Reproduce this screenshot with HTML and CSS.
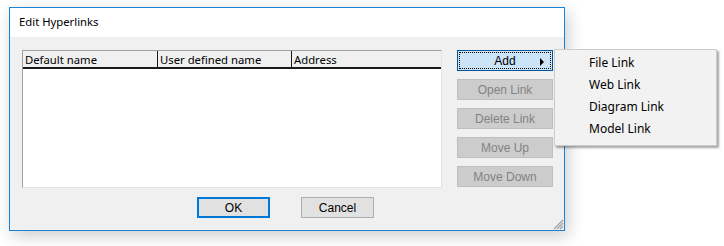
FILE: index.html
```html
<!DOCTYPE html>
<html lang="en">
<head>
    <meta charset="UTF-8">
    <title>Edit Hyperlinks</title>
    <link rel="stylesheet" href="styles.css">
</head>
<body>
    <div class="dialog">
        <div class="title-bar">Edit Hyperlinks</div>
        <div class="dialog-body">
            <div class="main-row">
                <!-- Hyperlink list -->
                <div class="list-box">
                    <div class="list-header">
                        <div class="col col-default">Default name</div>
                        <div class="col col-user">User defined name</div>
                        <div class="col col-address">Address</div>
                    </div>
                </div>

                <div class="side-buttons">
                    <button class="btn btn-add"><span class="focus-rect">Add<span class="arrow"></span></span></button>
                    <button class="btn btn-disabled">Open Link</button>
                    <button class="btn btn-disabled">Delete Link</button>
                    <button class="btn btn-disabled">Move Up</button>
                    <button class="btn btn-disabled">Move Down</button>
                </div>
            </div>

            <div class="bottom-row">
                <button class="btn btn-ok">OK</button>
                <button class="btn btn-cancel">Cancel</button>
            </div>

            <svg class="grip" width="11" height="11" viewBox="0 0 11 11">
                <path d="M10 1 L1 10 M10 4 L4 10 M10 7 L7 10" stroke="#a0a0a0" stroke-width="1.2"/>
            </svg>
        </div>
    </div>

    <!-- Add submenu -->
    <div class="popup-menu">
        <div class="menu-item">File Link</div>
        <div class="menu-item">Web Link</div>
        <div class="menu-item">Diagram Link</div>
        <div class="menu-item">Model Link</div>
    </div>
</body>
</html>
```

FILE: styles.css
```css
/* Page */
body {
    margin: 0;
    background: #ffffff;
    font-family: "Noto Sans", "Liberation Sans", sans-serif;
    font-size: 11.3px;
    color: #000;
    position: relative;
    width: 724px;
    height: 246px;
    overflow: hidden;
}

/* Dialog window */
.dialog {
    position: relative;
    margin: 7px 0 0 9px;
    width: 554px;
    height: 222px;
    border: 1px solid #1883d7;
    background: #f0f0f0;
    box-shadow: 3px 5px 16px rgba(0, 0, 0, 0.2);
    display: flex;
    flex-direction: column;
}

.title-bar {
    height: 29px;
    background: #ffffff;
    padding-left: 9px;
    line-height: 27px;
}

.dialog-body {
    flex: 1;
    padding: 13px 0 0 12px;
    display: flex;
    flex-direction: column;
}

.main-row {
    display: flex;
    gap: 15px;
}

/* List box */
.list-box {
    width: 418px;
    height: 136px;
    background: #ffffff;
    border-top: 1px solid #a0a0a0;
    border-left: 1px solid #a0a0a0;
    border-right: 1px solid #e3e3e3;
    border-bottom: 1px solid #e3e3e3;
}

.list-header {
    display: flex;
    height: 16px;
    background: #f0f0f0;
    border-bottom: 2px solid #1a1a1a;
}

.col {
    padding-left: 2px;
    line-height: 17px;
    border-right: 1px solid #1a1a1a;
    box-sizing: border-box;
}
.col-default { width: 135px; }
.col-user { width: 134px; }
.col-address { flex: 1; border-right: none; }

/* Buttons */
.btn {
    font-family: "Liberation Sans", "DejaVu Sans", sans-serif;
    font-size: 12px;
    height: 21px;
    padding: 0;
    box-sizing: border-box;
    background: #e1e1e1;
    border: 1px solid #adadad;
    color: #000;
}

.side-buttons {
    display: flex;
    flex-direction: column;
    gap: 8px;
    width: 96px;
}

.btn-disabled {
    background: #cccccc;
    border: 1px solid #bfbfbf;
    color: #838383;
}

.btn-add {
    background: #cce4f7;
    border: 1px solid #005499;
    padding: 1px;
}

.focus-rect {
    display: flex;
    align-items: center;
    justify-content: center;
    position: relative;
    height: 100%;
    box-sizing: border-box;
    border: 1px dotted #000;
}

.arrow {
    position: absolute;
    right: 6px;
    top: 5px;
    width: 0;
    height: 0;
    border-top: 4px solid transparent;
    border-bottom: 4px solid transparent;
    border-left: 4px solid #000;
}

.bottom-row {
    display: flex;
    gap: 31px;
    margin: 9px 0 0 175px;
}

.btn-ok,
.btn-cancel {
    width: 73px;
}

.btn-ok {
    border: 2px solid #0078d7;
}

.grip {
    position: absolute;
    right: 0;
    bottom: 0;
}

/* Popup menu */
.popup-menu {
    position: absolute;
    left: 554px;
    top: 49px;
    width: 161px;
    height: 93px;
    background: #f2f2f2;
    border: 1px solid #cccccc;
    box-shadow: 2px 2px 2px rgba(0, 0, 0, 0.35);
    padding-top: 2px;
    box-sizing: content-box;
}

.menu-item {
    height: 22px;
    line-height: 22px;
    padding-left: 34px;
    font-size: 12px;
}
```
